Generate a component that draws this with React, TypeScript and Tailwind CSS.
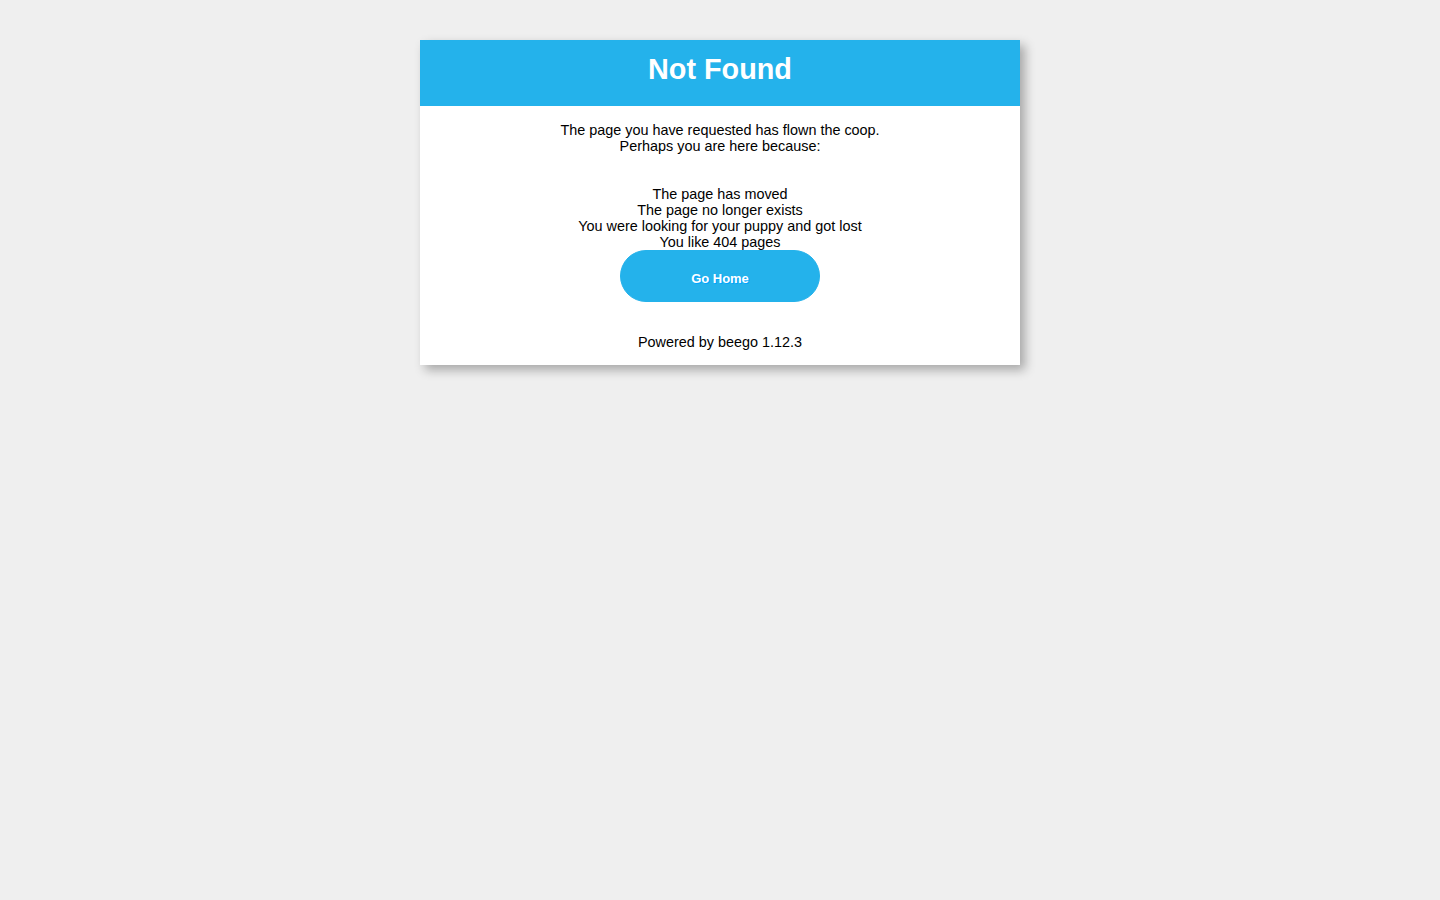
export default function App() {
  return (
    <div
      className="min-h-[900px] bg-[#efefef] pt-[40px] text-[14.4px] text-black"
      style={{ fontFamily: '"Liberation Sans", Arial, sans-serif' }}
    >
      <div className="mx-auto w-[600px] text-center shadow-[5px_5px_10px_rgba(0,0,0,0.3)]">
        <div className="w-[600px] bg-white pb-[15px]">
          <div className="h-[66px] bg-[#24b2eb] p-[13px]">
            <h1 className="text-[28.8px] font-bold leading-[33px] text-white">Not Found</h1>
          </div>
          <div className="leading-[16px]">
            <div className="h-[16px]" />
            <div>The page you have requested has flown the coop.</div>
            <div>Perhaps you are here because:</div>
            <div className="h-[16px]" />
            <div className="h-[16px]" />
            <div>The page has moved</div>
            <div>The page no longer exists</div>
            <div>You were looking for your puppy and got lost</div>
            <div>You like 404 pages</div>
            <a
              href="#"
              className="mx-[200px] flex h-[52px] items-center justify-center rounded-[100px] border border-[#24b2eb] bg-[#24b2eb] px-[20px] pt-[6px] text-[12.96px] font-bold text-white [text-shadow:1px_1px_0_#00a5ff]"
            >
              Go Home
            </a>
            <div className="h-[32px]" />
            <div>Powered by beego 1.12.3</div>
          </div>
        </div>
      </div>
    </div>
  );
}
